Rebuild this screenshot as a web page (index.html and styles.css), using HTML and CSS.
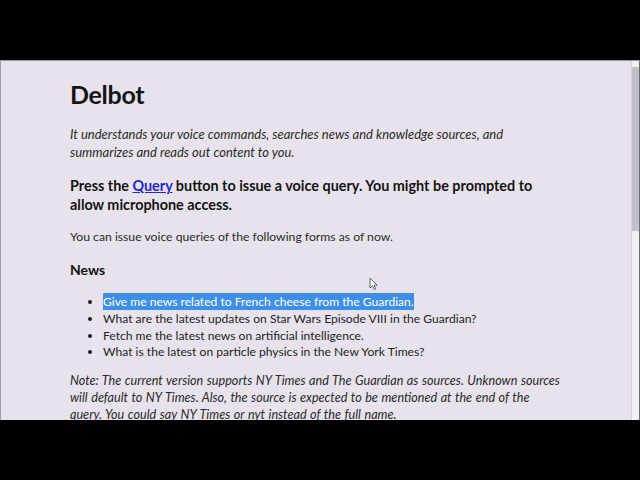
FILE: index.html
```html
<!DOCTYPE html>
<html>
<head>
<meta charset="utf-8">
<link rel="stylesheet" href="styles.css">
</head>
<body>
<div class="screen">
  <div class="bar"></div>
  <div class="viewport">
    <div class="page">
      <div class="content">
        <h1 class="title">Delbot</h1>
        <p class="intro">It understands your voice commands, searches news and knowledge sources, and summarizes and reads out content to you.</p>
        <p class="lead">Press the <a class="link" href="#">Query</a> button to issue a voice query. You might be prompted to allow microphone access.</p>
        <p class="plain">You can issue voice queries of the following forms as of now.</p>
        <h2 class="section">News</h2>
        <ul class="list">
          <li><span class="sel">Give me news related to French cheese from the Guardian.</span></li>
          <li>What are the latest updates on Star Wars Episode VIII in the Guardian?</li>
          <li>Fetch me the latest news on artificial intelligence.</li>
          <li>What is the latest on particle physics in the New York Times?</li>
        </ul>
        <p class="note">Note: The current version supports NY Times and The Guardian as sources. Unknown sources will default to NY Times. Also, the source is expected to be mentioned at the end of the query. You could say NY Times or nyt instead of the full name.</p>
      </div>
      <svg class="cursor" width="9" height="14" viewBox="0 0 9 14"><path d="M1 1 L1 11 L3.5 8.7 L5.3 12.6 L6.8 11.9 L5 8.2 L8.2 8.2 Z" fill="#fff" stroke="#555" stroke-width="0.9" stroke-linejoin="round"/></svg>
    </div>
    <div class="scrollbar">
      <div class="arrow up"></div>
      <div class="track"><div class="thumb"></div></div>
      <div class="arrow down"></div>
    </div>
  </div>
  <div class="bar"></div>
</div>
</body>
</html>
```
FILE: styles.css
```css
html, body {
  margin: 0;
  padding: 0;
  background: #000;
}
.screen {
  width: 640px;
  height: 480px;
  display: flex;
  flex-direction: column;
  background: #000;
}
.bar {
  height: 60px;
  flex: none;
}
.viewport {
  height: 360px;
  flex: none;
  display: flex;
  background: #e7e2eb;
  border-top: 1px solid #9a97a0;
  border-left: 1px solid #a09ca6;
  box-sizing: border-box;
  overflow: hidden;
}
.page {
  flex: 1;
  position: relative;
  overflow: hidden;
}
.content {
  width: 494px;
  padding-left: 69px;
  padding-top: 18px;
  font-family: Lato, "Open Sans", sans-serif;
  color: #141414;
}
.title {
  font-size: 25px;
  font-weight: 700;
  margin: 0 0 16px 0;
  line-height: 30px;
  letter-spacing: -0.3px;
}
.intro {
  font-style: italic;
  font-size: 13px;
  line-height: 18px;
  margin: 0 0 15px 0;
  color: #2a2a2a;
}
.lead {
  font-weight: 700;
  font-size: 14.4px;
  line-height: 19px;
  margin: 0 0 14px 0;
}
.link {
  color: #2626c8;
  text-decoration: underline;
}
.plain {
  font-size: 12.2px;
  line-height: 18px;
  margin: 0 0 14px 0;
  color: #2a2a2a;
}
.section {
  font-size: 14px;
  font-weight: 700;
  line-height: 19px;
  margin: 0 0 15px 0;
}
.list {
  margin: 0 0 12px 0;
  padding-left: 33px;
  font-size: 12.1px;
  line-height: 16.8px;
  color: #1e1e1e;
}
.sel {
  background: #3d8fe8;
  color: #fff;
  padding: 1px 0;
}
.note {
  font-style: italic;
  font-size: 12.6px;
  word-spacing: 0.6px;
  line-height: 16.7px;
  margin: 0;
  color: #2a2a2a;
}
.cursor {
  position: absolute;
  left: 368px;
  top: 216px;
}
.scrollbar {
  width: 7px;
  flex: none;
  display: flex;
  flex-direction: column;
  background: #f3eff6;
  border-left: 1px solid #d6d2da;
  border-right: 1px solid #6e6b72;
}
.arrow {
  height: 6px;
  flex: none;
}
.track {
  flex: 1;
}
.thumb {
  height: 164px;
  background: #c3bfc8;
}
```
